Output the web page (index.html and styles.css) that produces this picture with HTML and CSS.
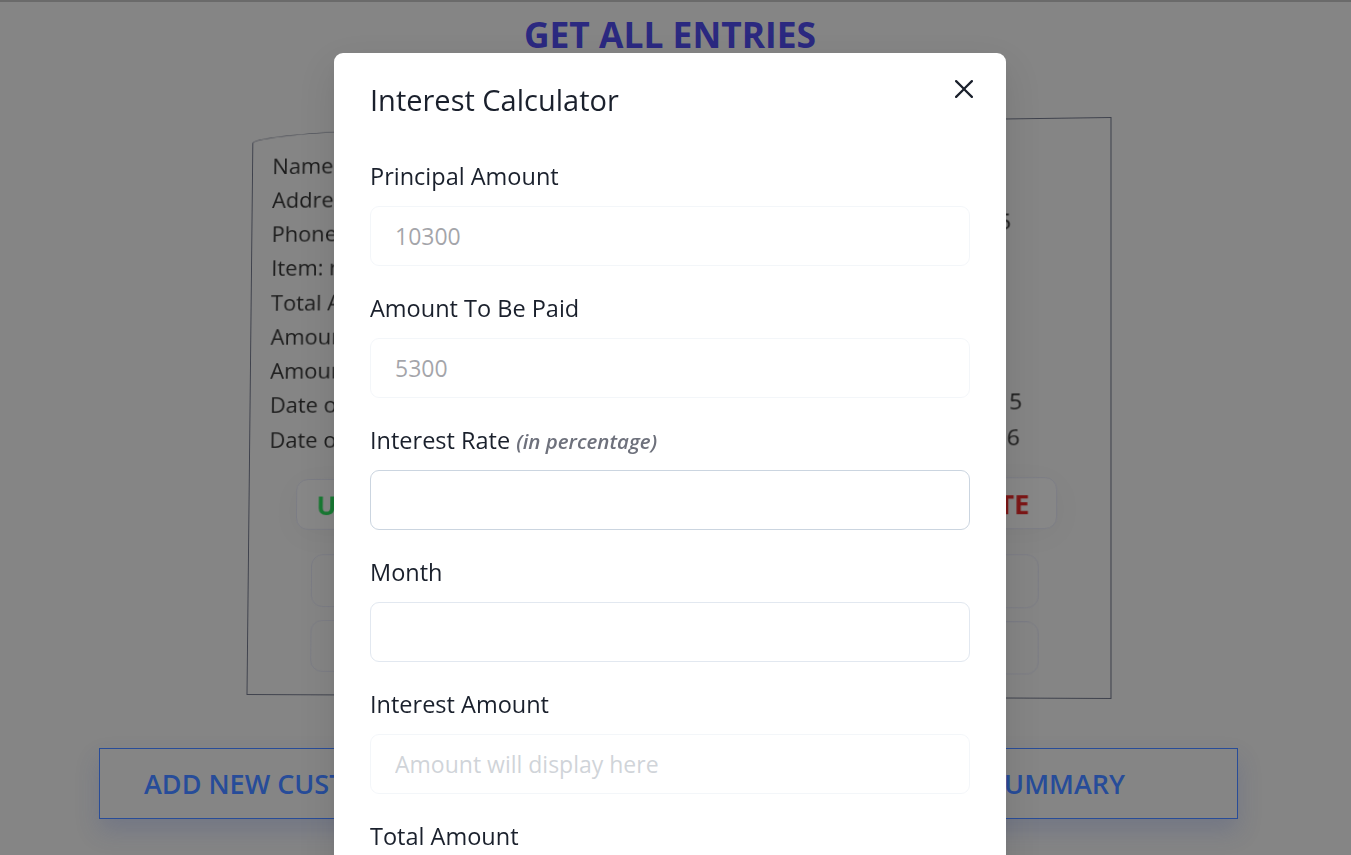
FILE: index.html
```html
<!DOCTYPE html>
<html lang="en">
<head>
<meta charset="utf-8">
<title>Get All Entries</title>
<link rel="stylesheet" href="styles.css">
</head>
<body>
<div class="page">
  <h1 class="page-title">GET ALL ENTRIES</h1>

  <div class="card-wrap">
    <div class="card-frame">
      <div class="entry-card">
        <div class="entry-line"><span>Name:</span><span class="val-mid">Ramesh Kumar</span></div>
        <div class="entry-line"><span>Address:</span><span class="val-mid">Gandhi Nagar</span></div>
        <div class="entry-line"><span>Phone:</span><span class="val-phone">9876543215</span></div>
        <div class="entry-line"><span>Item: ring</span><span></span></div>
        <div class="entry-line"><span>Total Amt</span><span class="val-mid">15600</span></div>
        <div class="entry-line"><span>Amount Paid:</span><span class="val-mid">10300</span></div>
        <div class="entry-line"><span>Amount Due:</span><span class="val-mid">5300</span></div>
        <div class="entry-line"><span>Date of Purchase:</span><span>Wed Mar 15 2023 &nbsp;5</span></div>
        <div class="entry-line"><span>Date of</span><span class="val-date">Payment: Sun Apr 16 2023 &nbsp;6</span></div>

        <div class="entry-actions">
          <div class="entry-btn btn-update">UPDATE</div>
          <div class="entry-btn btn-delete">DELETE</div>
        </div>
        <div class="entry-field"></div>
        <div class="entry-field second"></div>
      </div>
    </div>
  </div>

  <div class="main-actions">
    <div class="main-btn btn-left">ADD NEW CUSTOMER</div>
    <div class="main-btn btn-right">GET SUMMARY</div>
  </div>
</div>

<div class="overlay">
  <section class="modal">
    <header class="modal-header">Interest Calculator</header>
    <button class="modal-close" type="button" aria-label="Close">
      <svg viewBox="0 0 24 24" width="18" height="18" aria-hidden="true">
        <path fill="#1a202c" d="M.439,21.44a1.5,1.5,0,0,0,2.122,2.121L11.823,14.3a.25.25,0,0,1,.354,0l9.262,9.263a1.5,1.5,0,1,0,2.122-2.121L14.3,12.177a.25.25,0,0,1,0-.354l9.263-9.262A1.5,1.5,0,0,0,21.439.44L12.177,9.7a.25.25,0,0,1-.354,0L2.561.44A1.5,1.5,0,0,0,.439,2.561L9.7,11.823a.25.25,0,0,1,0,.354Z"/>
      </svg>
    </button>
    <div class="modal-body">
      <div class="field">
        <label class="field-label">Principal Amount</label>
        <input class="field-input" type="text" value="10300" disabled>
      </div>
      <div class="field">
        <label class="field-label">Amount To Be Paid</label>
        <input class="field-input" type="text" value="5300" disabled>
      </div>
      <div class="field">
        <label class="field-label">Interest Rate <span class="hint">(in percentage)</span></label>
        <input class="field-input hovered" type="text">
      </div>
      <div class="field">
        <label class="field-label">Month</label>
        <input class="field-input" type="text">
      </div>
      <div class="field">
        <label class="field-label">Interest Amount</label>
        <input class="field-input" type="text" placeholder="Amount will display here" disabled>
      </div>
      <div class="field">
        <label class="field-label">Total Amount</label>
        <input class="field-input" type="text" placeholder="Amount will display here" disabled>
      </div>
    </div>
  </section>
</div>
</body>
</html>
```

FILE: styles.css
```css
* { box-sizing: border-box; }

html, body {
  margin: 0;
  height: 100%;
  overflow: hidden;
}

body {
  font-family: "Open Sans", "Noto Sans", sans-serif;
  background: #858585;
  color: #1b1b1b;
}

.page {
  height: 100%;
  border-top: 2px solid #6a6a6a;
  padding-right: 11px;
}

.page-title {
  margin: 11px 0 0;
  text-align: center;
  font-size: 35.4px;
  line-height: 42px;
  font-weight: 700;
  color: #2b2980;
}

.card-wrap {
  display: flex;
  justify-content: center;
  margin-top: 62px;
}

/* transparent frame so the tilted card's border is not on the layer edge */
.card-frame {
  flex: none;
  width: 873px;
  height: 590px;
  padding: 4px;
  transform-origin: 0 0;
  transform: translateX(12.5px) matrix3d(0.965620, -0.013873, 0, -0.000031727, -0.010309, 0.965620, 0, -0.000011918, 0, 0, 1, 0, 6, 12, 0, 1) translate(-4px, -4px);
}

.entry-card {
  width: 865px;
  height: 582px;
  border: 1.6px solid #3e414c;
  border-top-left-radius: 255px 15px;
  padding-top: 19.6px;
  display: flex;
  flex-direction: column;
}

.entry-line {
  display: flex;
  justify-content: space-between;
  height: 35.27px;
  line-height: 35.27px;
  font-size: 22.5px;
  padding: 0 86.5px 0 20px;
  white-space: nowrap;
}

.val-mid { padding-right: 40px; }
.val-phone { padding-right: 11px; margin-top: -5px; }
.val-date { padding-right: 2px; }

.entry-actions {
  display: flex;
  justify-content: space-between;
  margin: 23.4px 52px 0 48px;
}

.entry-btn {
  width: 340px;
  height: 51.5px;
  border: 1px solid #7b7c84;
  border-radius: 12px;
  background: #878787;
  font-size: 27px;
  font-weight: 700;
  display: flex;
  align-items: center;
  box-shadow: 0 6px 30px rgba(0, 0, 0, 0.04);
}

.btn-update {
  color: #187a33;
  padding-left: 20px;
}

.btn-delete {
  color: #7c1616;
  justify-content: flex-end;
  padding-right: 26px;
}

.entry-field {
  height: 54px;
  margin: 25.3px 69.7px 0 64px;
  border: 1px solid #7b7c84;
  border-radius: 12px;
}

.entry-field.second {
  height: 53px;
  margin-top: 13.3px;
}

.main-actions {
  display: flex;
  justify-content: space-between;
  margin-top: 41px;
  padding: 0 102px 0 99px;
}

.main-btn {
  width: 540px;
  height: 71px;
  border: 1px solid #284c98;
  color: #274c99;
  font-size: 27px;
  font-weight: 600;
  display: flex;
  align-items: center;
  box-shadow: 0 12px 22px rgba(50, 70, 130, 0.22);
}

.btn-left { padding-left: 44px; }
.btn-right { justify-content: flex-end; padding-right: 112px; }

/* Modal */
.overlay {
  position: fixed;
  inset: 0;
  display: flex;
  justify-content: center;
  align-items: flex-start;
  padding: 53px 11px 0 0;
}

.modal {
  position: relative;
  width: 672px;
  background: #fff;
  border-radius: 9px;
  color: #1a202c;
  box-shadow: 0 15px 38px rgba(0, 0, 0, 0.1), 0 6px 12px rgba(0, 0, 0, 0.05);
}

.modal-header {
  padding: 24px 36px;
  font-size: 29px;
  line-height: 45px;
  font-weight: 500;
}

.modal-close {
  position: absolute;
  top: 12px;
  right: 18px;
  width: 48px;
  height: 48px;
  padding: 0;
  border: 0;
  background: transparent;
  display: flex;
  align-items: center;
  justify-content: center;
}

.modal-body {
  padding: 12px 36px;
}

.field + .field {
  margin-top: 24px;
}

.field-label {
  display: block;
  font-size: 23.5px;
  line-height: 36px;
  height: 36px;
  margin-bottom: 12px;
  font-weight: 500;
}

.hint {
  font-style: italic;
  font-weight: 600;
  font-size: 20.5px;
  line-height: 1;
  color: #6e717c;
}

.field-input {
  display: block;
  width: 100%;
  height: 60px;
  border: 1.5px solid #e2e8f0;
  border-radius: 9px;
  padding: 0 24px;
  font-family: inherit;
  font-size: 23px;
  color: #1a202c;
  background: #fff;
  outline: none;
}

.field-input:disabled {
  opacity: 0.4;
}

.field-input.hovered {
  border-color: #cbd5e0;
}

.field-input::placeholder {
  color: #8a93a0;
}
```
